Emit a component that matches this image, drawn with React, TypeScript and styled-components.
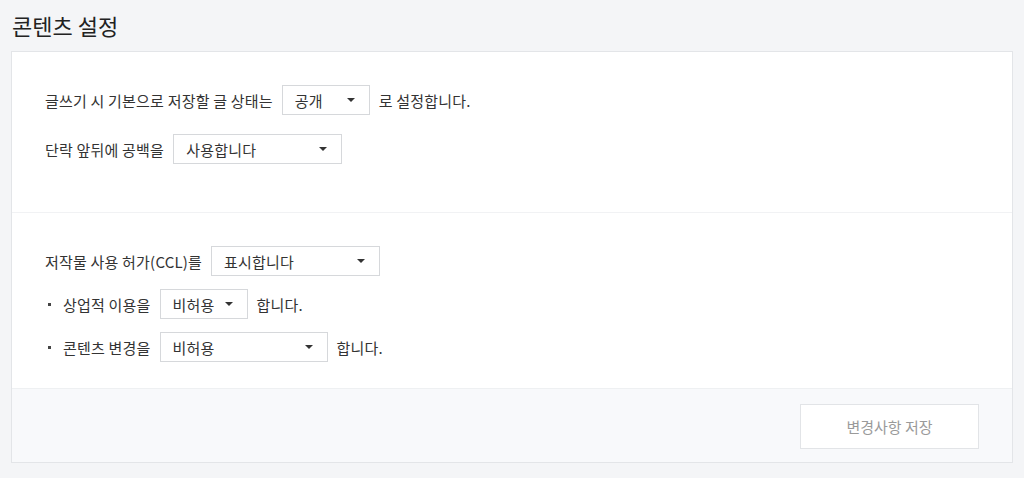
import React from 'react';
import styled, { createGlobalStyle } from 'styled-components';

const GlobalStyle = createGlobalStyle`
  html, body {
    margin: 0;
    padding: 0;
    background: #f4f5f7;
  }
  body {
    font-family: "Noto Sans CJK KR", "Noto Sans", sans-serif;
    color: #333;
  }
`;

const Page = styled.div`
  padding: 10px 11px 16px 11px;
  width: 1002px;
`;

const Title = styled.h1`
  margin: 0 0 11px 1px;
  font-size: 22px;
  font-weight: 400;
  line-height: 30px;
  color: #222;
`;

const Panel = styled.div`
  border: 1px solid #e3e5e8;
  background: #fff;
`;

const Section = styled.div<{ $top: number; $bottom: number; $gap: number }>`
  display: flex;
  flex-direction: column;
  gap: ${(p) => p.$gap}px;
  padding: ${(p) => p.$top}px 33px ${(p) => p.$bottom}px 33px;
  & + & {
    border-top: 1px solid #f1f2f4;
  }
`;

const Row = styled.div<{ $bullet?: boolean }>`
  display: flex;
  align-items: center;
  gap: 9px;
  font-size: 15px;
  height: 30px;
  padding-left: ${(p) => (p.$bullet ? '3px' : '0')};
`;

const Bullet = styled.span`
  width: 3px;
  height: 3px;
  background: #444;
  margin-right: 3px;
`;

const Label = styled.span`
  white-space: nowrap;
  letter-spacing: 0.2px;
`;

const Select = styled.div<{ $w: number }>`
  box-sizing: border-box;
  width: ${(p) => p.$w}px;
  height: 30px;
  border: 1px solid #d6d8db;
  background: #fff;
  display: flex;
  align-items: center;
  justify-content: space-between;
  padding: 0 14px 0 12px;
  font-size: 15px;
  letter-spacing: 0.2px;
  color: #333;
`;

const Caret = styled.span`
  width: 0;
  height: 0;
  border-left: 4px solid transparent;
  border-right: 4px solid transparent;
  border-top: 4px solid #333;
`;

const Footer = styled.div`
  border-top: 1px solid #eef0f2;
  background: #f8f9fb;
  display: flex;
  justify-content: flex-end;
  padding: 15px 33px 13px 0;
`;

const SaveButton = styled.button`
  box-sizing: border-box;
  width: 179px;
  height: 45px;
  border: 1px solid #e2e4e7;
  background: #fff;
  color: #9a9a9a;
  font-family: inherit;
  font-size: 15px;
  cursor: default;
`;

function Dropdown({ value, width }: { value: string; width: number }) {
  return (
    <Select $w={width}>
      <span>{value}</span>
      <Caret />
    </Select>
  );
}

export default function App() {
  return (
    <>
      <GlobalStyle />
      <Page>
        <Title>콘텐츠 설정</Title>
        <Panel>
          <Section $top={33} $bottom={48} $gap={19}>
            <Row>
              <Label>글쓰기 시 기본으로 저장할 글 상태는</Label>
              <Dropdown value="공개" width={88} />
              <Label>로 설정합니다.</Label>
            </Row>
            <Row>
              <Label>단락 앞뒤에 공백을</Label>
              <Dropdown value="사용합니다" width={169} />
            </Row>
          </Section>
          <Section $top={33} $bottom={26} $gap={13}>
            <Row>
              <Label>저작물 사용 허가(CCL)를</Label>
              <Dropdown value="표시합니다" width={169} />
            </Row>
            <Row $bullet>
              <Bullet />
              <Label>상업적 이용을</Label>
              <Dropdown value="비허용" width={88} />
              <Label>합니다.</Label>
            </Row>
            <Row $bullet>
              <Bullet />
              <Label>콘텐츠 변경을</Label>
              <Dropdown value="비허용" width={168} />
              <Label>합니다.</Label>
            </Row>
          </Section>
          <Footer>
            <SaveButton>변경사항 저장</SaveButton>
          </Footer>
        </Panel>
      </Page>
    </>
  );
}
